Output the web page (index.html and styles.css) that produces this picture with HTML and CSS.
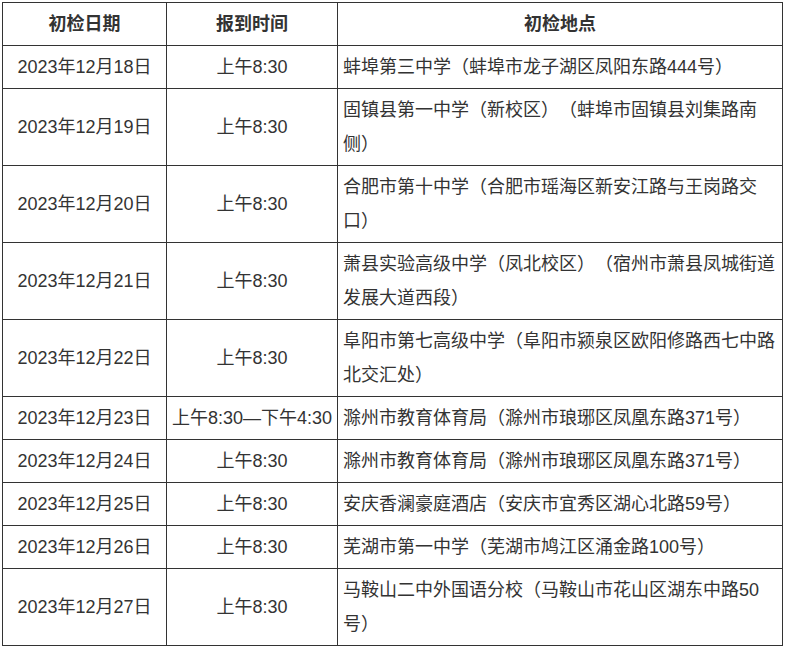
FILE: index.html
```html
<!DOCTYPE html>
<html lang="zh-CN">
<head>
<meta charset="utf-8">
<title>初检安排</title>
<link rel="stylesheet" href="styles.css">
</head>
<body>
<div class="page">
<table class="schedule">
  <colgroup>
    <col class="c-date">
    <col class="c-time">
    <col class="c-place">
  </colgroup>
  <thead>
    <tr><th>初检日期</th><th>报到时间</th><th>初检地点</th></tr>
  </thead>
  <tbody>
    <tr><td class="ctr">2023年12月18日</td><td class="ctr">上午8:30</td><td>蚌埠第三中学（蚌埠市龙子湖区凤阳东路444号）</td></tr>
    <tr><td class="ctr">2023年12月19日</td><td class="ctr">上午8:30</td><td>固镇县第一中学（新校区）（蚌埠市固镇县刘集路南侧）</td></tr>
    <tr><td class="ctr">2023年12月20日</td><td class="ctr">上午8:30</td><td>合肥市第十中学（合肥市瑶海区新安江路与王岗路交口）</td></tr>
    <tr><td class="ctr">2023年12月21日</td><td class="ctr">上午8:30</td><td>萧县实验高级中学（凤北校区）（宿州市萧县凤城街道发展大道西段）</td></tr>
    <tr><td class="ctr">2023年12月22日</td><td class="ctr">上午8:30</td><td>阜阳市第七高级中学（阜阳市颍泉区欧阳修路西七中路北交汇处）</td></tr>
    <tr><td class="ctr">2023年12月23日</td><td class="ctr">上午8:30—下午4:30</td><td>滁州市教育体育局（滁州市琅琊区凤凰东路371号）</td></tr>
    <tr><td class="ctr">2023年12月24日</td><td class="ctr">上午8:30</td><td>滁州市教育体育局（滁州市琅琊区凤凰东路371号）</td></tr>
    <tr><td class="ctr">2023年12月25日</td><td class="ctr">上午8:30</td><td>安庆香澜豪庭酒店（安庆市宜秀区湖心北路59号）</td></tr>
    <tr><td class="ctr">2023年12月26日</td><td class="ctr">上午8:30</td><td>芜湖市第一中学（芜湖市鸠江区涌金路100号）</td></tr>
    <tr><td class="ctr">2023年12月27日</td><td class="ctr">上午8:30</td><td>马鞍山二中外国语分校（马鞍山市花山区湖东中路50号）</td></tr>
  </tbody>
</table>
</div>
</body>
</html>
```
FILE: styles.css
```css
html, body {
  margin: 0;
  padding: 0;
  background: #ffffff;
}
.page {
  padding: 2px 0 0 2px;
}
.schedule {
  width: 780px;
  table-layout: fixed;
  border-collapse: collapse;
  font-family: "Liberation Sans", "Noto Sans CJK SC", sans-serif;
  font-size: 18px;
  color: #333333;
  text-spacing-trim: space-all;
}
.c-date { width: 164px; }
.c-time { width: 171px; }
.c-place { width: 445px; }
.schedule th,
.schedule td {
  border: 1px solid #333333;
  padding: 4px 5px;
  line-height: 34px;
  vertical-align: middle;
  text-align: left;
  word-break: normal;
  text-spacing-trim: space-all;
}
.schedule th {
  font-weight: bold;
  text-align: center;
}
.schedule td.ctr {
  text-align: center;
  white-space: nowrap;
  padding: 4px 2px;
}
```
